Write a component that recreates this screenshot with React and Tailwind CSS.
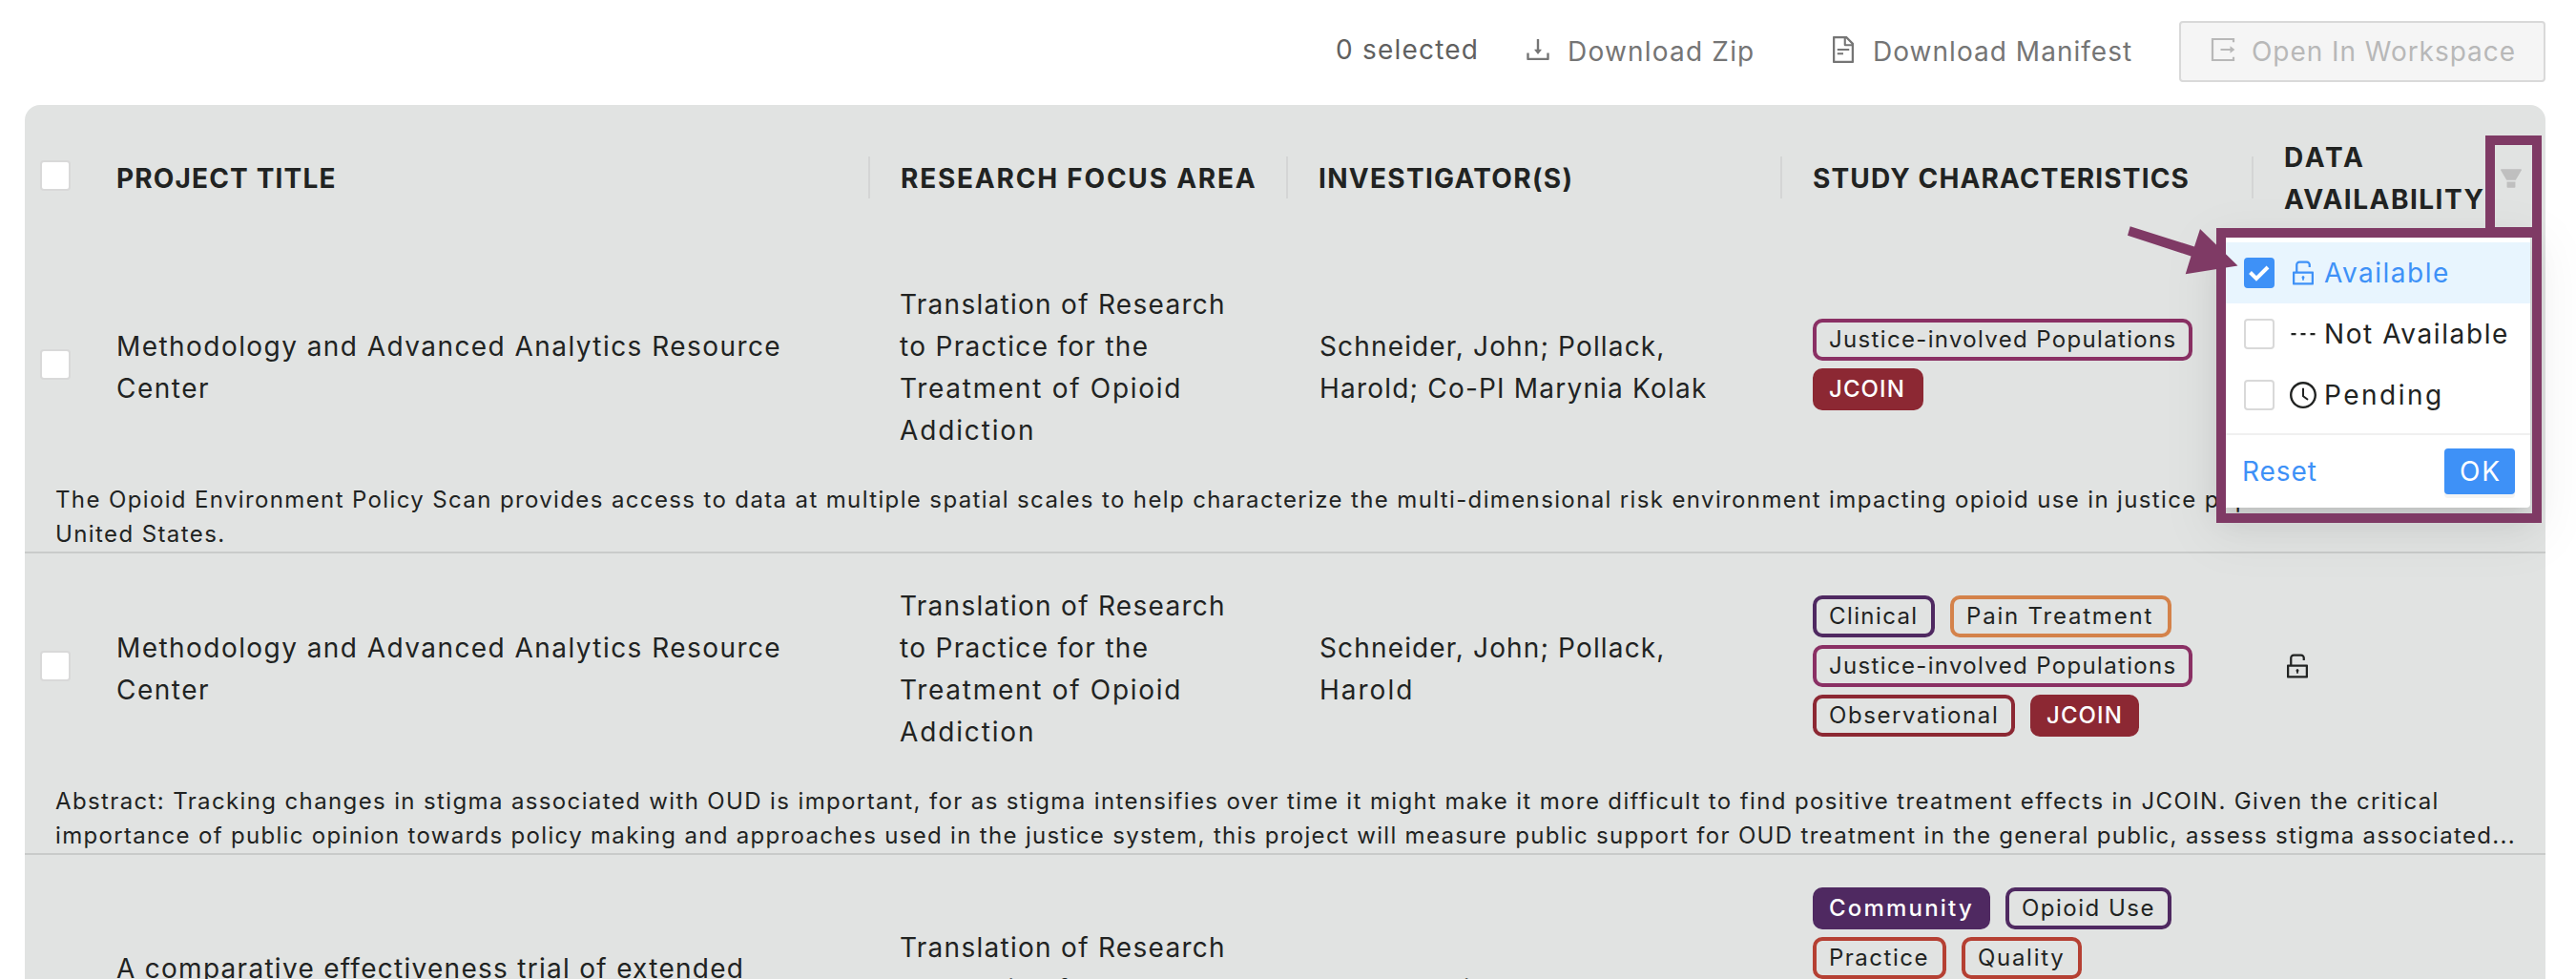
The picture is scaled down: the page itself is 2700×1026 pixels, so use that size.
import React from "react";
import {
  AiOutlineDownload,
  AiOutlineFileText,
  AiOutlineUnlock,
  AiOutlineClockCircle,
  AiOutlineDash,
  AiFillFilter,
} from "react-icons/ai";

const GRID = "grid grid-cols-[64px_822px_438px_518px_494px_306px]";

const FOCUS = [
  ["Translation of Research", "tracking-[1.28px]"],
  ["to Practice for the", "tracking-[1.3px]"],
  ["Treatment of Opioid", "tracking-[1.72px]"],
  ["Addiction", "tracking-[1.85px]"],
];

const METHODOLOGY = [
  ["Methodology and Advanced Analytics Resource", "tracking-[1.44px]"],
  ["Center", "tracking-[1.5px]"],
];

const ROWS = [
  {
    title: METHODOLOGY,
    people: [
      ["Schneider, John; Pollack,", "tracking-[1.15px]"],
      ["Harold; Co-PI Marynia Kolak", "tracking-[1.2px]"],
    ],
    tags: [
      [["Justice-involved Populations", "w-[398px] border-[#8a3064] tracking-[1.34px]"]],
      [["JCOIN", "w-[116px] border-[#8c2833] bg-[#8c2833] font-medium text-white tracking-[1.1px]"]],
    ],
    abstract: [
      [
        "The Opioid Environment Policy Scan provides access to data at multiple spatial scales to help characterize the multi-dimensional risk environment impacting opioid use in justice populations across the",
        "tracking-[1.37px]",
      ],
      ["United States.", "tracking-[1.4px]"],
    ],
  },
  {
    title: METHODOLOGY,
    people: [
      ["Schneider, John; Pollack,", "tracking-[1.15px]"],
      ["Harold", "tracking-[2px]"],
    ],
    tags: [
      [
        ["Clinical", "w-[128px] border-[#4f2961] tracking-[1.4px]"],
        ["Pain Treatment", "w-[232px] border-[#d4824a] tracking-[1.8px]"],
      ],
      [["Justice-involved Populations", "w-[398px] border-[#8a3064] tracking-[1.34px]"]],
      [
        ["Observational", "w-[212px] border-[#8c2833] tracking-[1.6px]"],
        ["JCOIN", "w-[114px] border-[#8c2833] bg-[#8c2833] font-medium text-white tracking-[1.1px]"],
      ],
    ],
    unlocked: true,
    abstract: [
      [
        "Abstract: Tracking changes in stigma associated with OUD is important, for as stigma intensifies over time it might make it more difficult to find positive treatment effects in JCOIN. Given the critical",
        "tracking-[1.37px]",
      ],
      [
        "importance of public opinion towards policy making and approaches used in the justice system, this project will measure public support for OUD treatment in the general public, assess stigma associated...",
        "tracking-[1.32px]",
      ],
    ],
  },
  {
    title: [
      ["A comparative effectiveness trial of extended", "tracking-[1.28px]"],
      ["release naltrexone versus extended-release", "tracking-[1.28px]"],
      ["buprenorphine", "tracking-[1.28px]"],
    ],
    people: [
      ["Gordon, Michael S.;", "tracking-[1.25px]"],
      ["Vocci, Frank", "tracking-[1.25px]"],
    ],
    tags: [
      [
        ["Community", "w-[186px] border-[#4f2961] bg-[#4f2961] font-medium text-white tracking-[2.2px]"],
        ["Opioid Use", "w-[174px] border-[#4f2961] tracking-[1.5px]"],
      ],
      [
        ["Practice", "w-[140px] border-[#b54033] tracking-[1.5px]"],
        ["Quality", "w-[126px] border-[#b54033] tracking-[1.7px]"],
      ],
      [],
      [],
      [],
    ],
    abstract: [],
  },
];

function Lines({ lines }) {
  return lines.map(([text, tracking]) => (
    <div key={text} className={`whitespace-nowrap ${tracking}`}>
      {text}
    </div>
  ));
}

function Checkbox({ checked = false }) {
  return (
    <span
      className={`flex size-8 shrink-0 items-center justify-center rounded-[4px] border-2 ${
        checked ? "border-[#3e91f7] bg-[#3e91f7]" : "border-[#d9d9d9] bg-white"
      }`}
    >
      {checked && (
        <svg viewBox="0 0 24 18" className="h-[18px] w-6" fill="none" stroke="#fff" strokeWidth="4">
          <path d="M2.5 8.5 9 15 21 3" />
        </svg>
      )}
    </span>
  );
}

function ExportIcon() {
  return (
    <svg viewBox="0 0 32 32" className="mt-1 mr-3.5 size-8" fill="none" stroke="currentColor" strokeWidth="2.2">
      <path d="M27 8.2V5H5v22h22v-3.2M13.5 16H24" />
      <path d="M23.5 12.2 28.4 16l-4.9 3.8Z" fill="currentColor" stroke="none" />
    </svg>
  );
}

function HeaderCell({ children, last = false }) {
  return (
    <div className="flex items-center">
      <div className="flex-1 pt-0.5 pl-8 font-bold">{children}</div>
      {!last && <span className="h-11 w-0.5 bg-[#d4d5d5]" />}
    </div>
  );
}

function StudyRow({ row }) {
  return (
    <section className="border-b-2 border-[#c9cbca]">
      <div className={`${GRID} items-center pt-8 pb-[34px]`}>
        <div className="mb-1 pl-4">
          <Checkbox />
        </div>
        <div className="-mb-px pt-px pl-8">
          <Lines lines={row.title} />
        </div>
        <div className="-mb-px pt-px pl-[31px]">
          <Lines lines={FOCUS} />
        </div>
        <div className="-mb-px pt-px pl-[33px]">
          <Lines lines={row.people} />
        </div>
        <div className="pl-8">
          {row.tags.map((line, i) => (
            <div key={i} className="flex h-[52px] gap-4 pt-0.5">
              {line.map(([label, style]) => (
                <span
                  key={label}
                  className={`h-11 rounded-[10px] border-4 pl-[13px] text-[24px] leading-9 whitespace-nowrap ${style}`}
                >
                  {label}
                </span>
              ))}
            </div>
          ))}
        </div>
        <div className="mb-1 pl-[30px]">{row.unlocked && <AiOutlineUnlock className="size-8" />}</div>
      </div>
      <div className="pl-8 text-[24px] leading-9">
        <Lines lines={row.abstract} />
      </div>
    </section>
  );
}

function FilterOption({ icon, label, checked = false, tracking }) {
  return (
    <div
      className={`flex h-16 items-center pl-6 whitespace-nowrap ${tracking} ${
        checked ? "bg-[#e8f5fe] text-[#3e91f7]" : ""
      }`}
    >
      <Checkbox checked={checked} />
      <span className="mr-1.5 ml-3.5">{icon}</span>
      {label}
    </div>
  );
}

function FilterMenu() {
  return (
    <div className="absolute top-[246px] left-[2328px] h-[286px] w-[324px] rounded-[4px] bg-white pt-2 shadow-[0_6px_12px_-8px_rgba(0,0,0,0.12),0_12px_32px_0_rgba(0,0,0,0.08),0_18px_56px_16px_rgba(0,0,0,0.05)]">
      <FilterOption checked label="Available" tracking="tracking-[1.5px]" icon={<AiOutlineUnlock className="size-8" />} />
      <FilterOption label="Not Available" tracking="tracking-[1.6px]" icon={<AiOutlineDash className="size-8" />} />
      <FilterOption label="Pending" tracking="tracking-[2.5px]" icon={<AiOutlineClockCircle className="size-8" />} />
      <div className="mt-2 flex h-[78px] items-center justify-between border-t-2 border-[#f0f0f0] pr-4 pl-[22px]">
        <span className="tracking-[0.9px] text-[#3e91f7]">Reset</span>
        <span className="flex h-12 w-[74px] items-center justify-center rounded-[4px] bg-[#3e91f7] pl-0.5 tracking-[1.8px] text-white shadow-[0_4px_0_rgba(0,0,0,0.045)]">
          OK
        </span>
      </div>
    </div>
  );
}

function Annotations() {
  return (
    <>
      <div className="absolute top-[142px] left-[2605px] h-[106px] w-[59px] border-10 border-[#7f3a65]" />
      <div className="absolute top-[239px] left-[2323px] h-[309px] w-[341px] border-10 border-[#7f3a65]" />
      <svg viewBox="0 0 120 54" className="absolute top-[236px] left-[2228px] h-[54px] w-[120px]" fill="#7f3a65">
        <path d="M4.7 1.3 72 22.5 78 4 117.5 42.5 62.7 51.3 68.5 32.5 2 10.7Z" />
      </svg>
    </>
  );
}

export default function App() {
  return (
    <div className="relative h-[1026px] w-[2700px] overflow-hidden bg-white font-[Inter,sans-serif] text-[28px] leading-[44px] text-[#212322]">
      <header className="flex h-[110px] items-start justify-end pt-[22px] pr-8 text-[#757575]">
        <div className="w-[196px] pt-2 tracking-[1.2px] text-[#606060]">0 selected</div>
        <div className="flex w-[320px] pt-2.5 tracking-[1.2px]">
          <AiOutlineDownload className="mt-1 mr-[15px] size-8" />
          Download Zip
        </div>
        <div className="flex w-[368px] pt-2.5 tracking-[1.03px]">
          <AiOutlineFileText className="mt-1 mr-[15px] size-8" />
          Download Manifest
        </div>
        <div className="flex h-16 w-[384px] rounded-[4px] border-2 border-[#d9d9d9] bg-[#f5f5f5] pt-2 pl-7 tracking-[0.95px] text-[#b8b8b8]">
          <ExportIcon />
          Open In Workspace
        </div>
      </header>

      <main className="mr-8 ml-[26px] h-[960px] rounded-t-2xl bg-[#e1e3e2]">
        <div className={`${GRID} mb-0.5 h-[152px]`}>
          <div className="flex items-center pb-1 pl-4">
            <Checkbox />
          </div>
          <HeaderCell>
            <span className="tracking-[1.15px]">PROJECT TITLE</span>
          </HeaderCell>
          <HeaderCell>
            <span className="whitespace-nowrap tracking-[1.78px]">RESEARCH FOCUS AREA</span>
          </HeaderCell>
          <HeaderCell>
            <span className="tracking-[1.3px]">INVESTIGATOR(S)</span>
          </HeaderCell>
          <HeaderCell>
            <span className="tracking-[1.15px]">STUDY CHARACTERISTICS</span>
          </HeaderCell>
          <HeaderCell last>
            <div className="flex items-center">
              <div className="w-[224px]">
                <div className="tracking-[2.8px]">DATA</div>
                <div className="tracking-[1.5px]">AVAILABILITY</div>
              </div>
              <AiFillFilter className="size-7 text-[#bfbfbf]" />
            </div>
          </HeaderCell>
        </div>
        {ROWS.map((row, i) => (
          <StudyRow key={i} row={row} />
        ))}
      </main>

      <FilterMenu />
      <Annotations />
    </div>
  );
}
